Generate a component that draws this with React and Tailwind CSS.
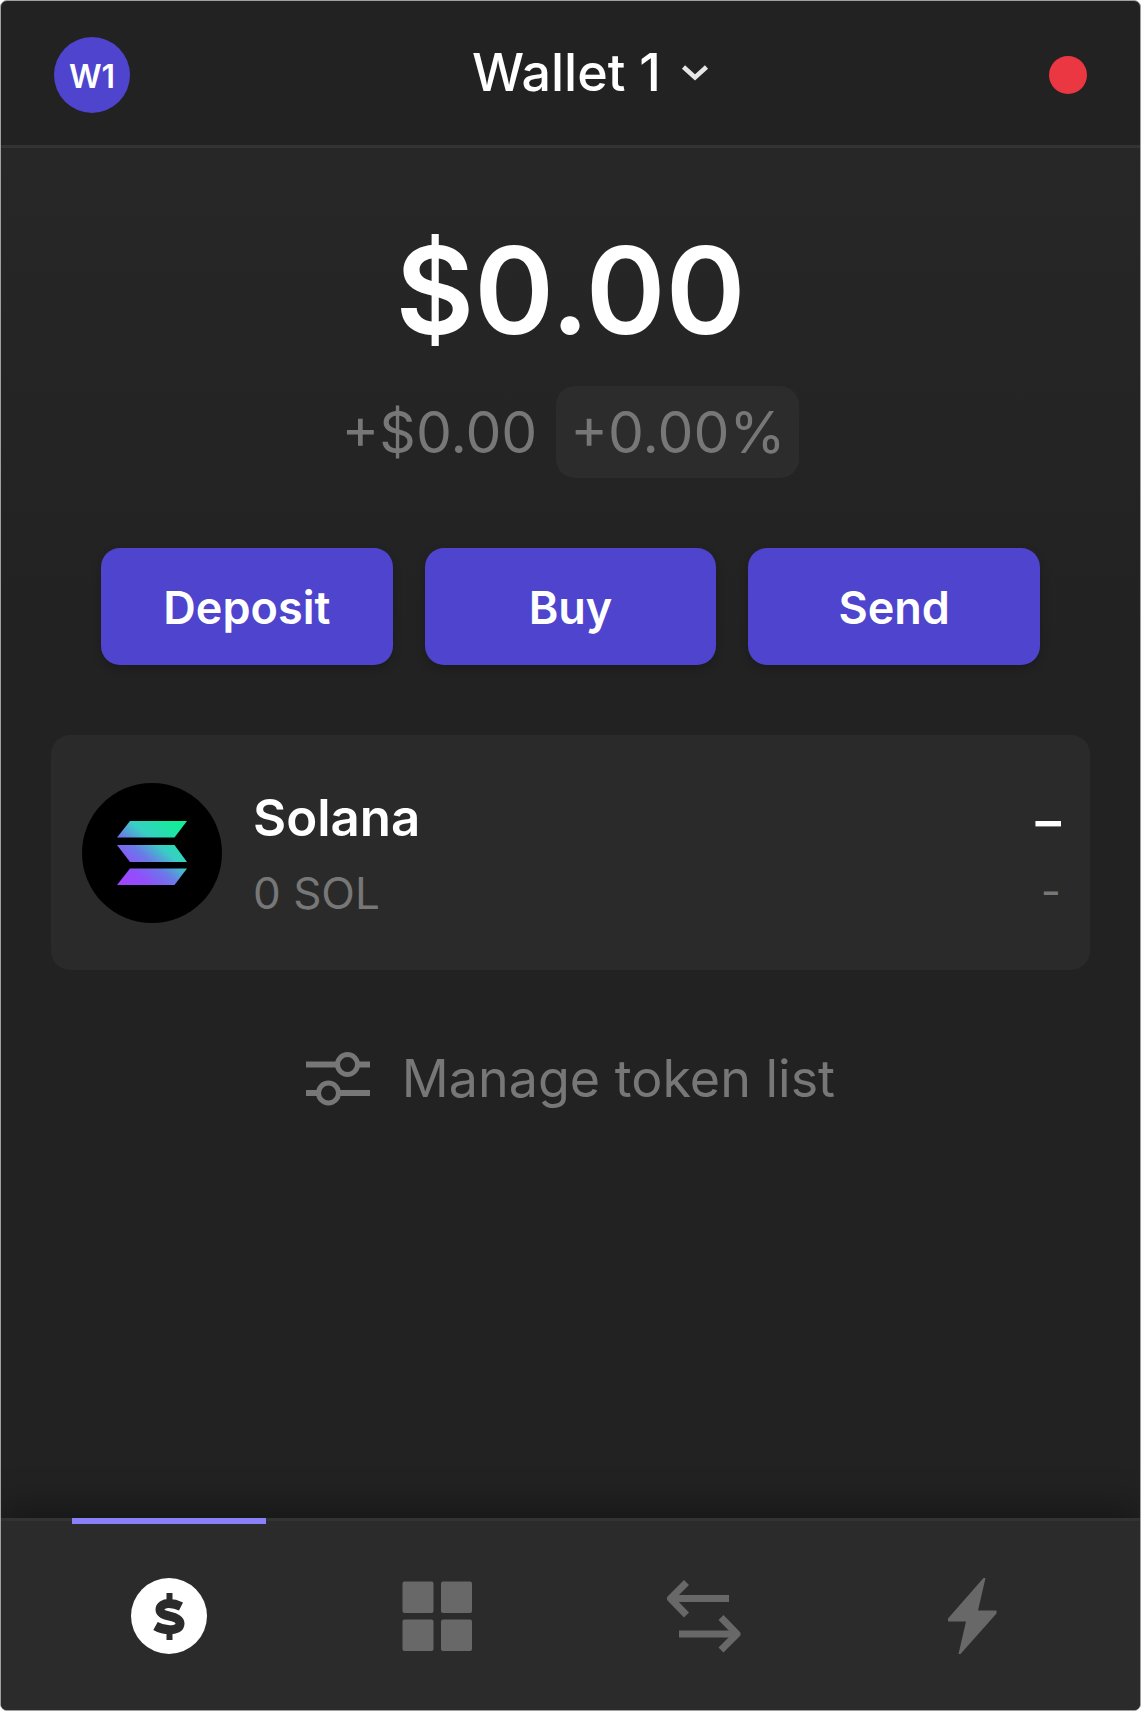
import React from "react";

function Chevron() {
  return (
    <svg className="h-[18px] w-[28px]" viewBox="0 0 28 18" fill="none" aria-hidden="true">
      <path d="M2.5 3 L14 13.5 L25.5 3" stroke="#e6e6e6" strokeWidth="4.6" />
    </svg>
  );
}

function SolanaLogo() {
  return (
    <svg className="size-[140px] shrink-0" viewBox="0 0 140 140" role="img" aria-label="Solana logo">
      <defs>
        <linearGradient id="sol" gradientUnits="userSpaceOnUse" x1="42" y1="102" x2="92" y2="42">
          <stop offset="0" stopColor="#a344ff" />
          <stop offset="0.22" stopColor="#9050fa" />
          <stop offset="0.45" stopColor="#6a7ae8" />
          <stop offset="0.68" stopColor="#38cfc4" />
          <stop offset="1" stopColor="#16eb9c" />
        </linearGradient>
      </defs>
      <circle cx="70" cy="70" r="70" fill="#000" />
      <g fill="url(#sol)">
        <path d="M48 38H105L92.5 54.500H35Z" />
        <path d="M35 62H92.500L105 79H48Z" />
        <path d="M48 85.500H105L92.500 102H35Z" />
      </g>
    </svg>
  );
}

function Sliders() {
  return (
    <svg className="h-[54px] w-[64px]" viewBox="0 0 64 54" fill="none" stroke="#777" aria-hidden="true">
      <g strokeWidth="6">
        <path d="M0 12.500H30M53 12.500H64" />
        <path d="M0 41H11M34 41H64" />
      </g>
      <g strokeWidth="5">
        <circle cx="41.500" cy="12.500" r="10" />
        <circle cx="22.500" cy="41" r="10" />
      </g>
    </svg>
  );
}

function DollarIcon() {
  return (
    <svg className="size-[76px]" viewBox="0 0 76 76" fill="none" aria-hidden="true">
      <circle cx="38" cy="38" r="38" fill="#fff" />
      <g stroke="#2b2b2b">
        <path d="M38.500 15V25M38.500 52V62" strokeWidth="6" />
        <path
          d="M50 28.500C46 26.500 42 25.500 38 25.500C32.500 25.500 29 28 29 31.500C29 35.500 33 36.800 38.500 38.200C45 39.800 49 41.500 49 45.500C49 50 44.500 51.800 38.500 51.800C33.500 51.800 29 50.500 24.500 48"
          strokeWidth="9"
        />
      </g>
    </svg>
  );
}

function GridIcon() {
  return (
    <svg className="size-[76px]" viewBox="0 0 76 76" fill="#686868" aria-hidden="true">
      <rect x="3.500" y="3.500" width="31" height="31.500" rx="2" />
      <rect x="42" y="3.500" width="31" height="31.500" rx="2" />
      <rect x="3.500" y="41.500" width="31" height="31.500" rx="2" />
      <rect x="42" y="41.500" width="31" height="31.500" rx="2" />
    </svg>
  );
}

function SwapIcon() {
  return (
    <svg
      className="size-[76px]"
      viewBox="0 0 76 76"
      fill="none"
      stroke="#686868"
      strokeWidth="7"
      strokeLinejoin="round"
      aria-hidden="true"
    >
      <path d="M63 20.500H6" />
      <path d="M20.500 4.500L4.500 20.500L20.500 37" />
      <path d="M13 56H70" />
      <path d="M55 39.500L71 56L55 72" />
    </svg>
  );
}

function BoltIcon() {
  return (
    <svg className="size-[76px]" viewBox="0 0 76 76" fill="#686868" aria-hidden="true">
      <path d="M51.500 0L44 32.500H62.500V35.500L26.500 76H24.500L32 43.500H14V40.500L49.500 0Z" />
    </svg>
  );
}

const tabs = [
  { label: "Balances", Icon: DollarIcon, active: true },
  { label: "Collectibles", Icon: GridIcon },
  { label: "Swap", Icon: SwapIcon },
  { label: "Activity", Icon: BoltIcon },
];

export default function App() {
  return (
    <div className="min-h-screen bg-white font-['Inter',sans-serif]">
      <div className="flex min-h-screen flex-col overflow-hidden rounded-[7px] border border-[#a0a0a0] bg-[#222222] text-white">
        <header className="grid h-[147px] shrink-0 grid-cols-[1fr_auto_1fr] items-center border-b-3 border-[#333333] px-[53px] pt-1">
          <button
            aria-label="Account W1"
            className="flex size-[76px] items-center justify-center rounded-full bg-[#4e44ce] pt-1 text-[32px] leading-none font-semibold"
          >
            W1
          </button>
          <button className="ml-10 flex items-center gap-5 pb-1 text-[52px] leading-[60px] font-medium">
            Wallet 1
            <Chevron />
          </button>
          <span role="status" aria-label="Disconnected" className="size-[38px] justify-self-end rounded-full bg-[#eb3742]" />
        </header>

        <main className="flex flex-1 flex-col bg-linear-to-b from-[#272727] to-[#222222] to-35% px-[50px] pt-[66px]">
          <h1 className="text-center text-[121px] leading-[152px] font-semibold">$0.00</h1>
          <div className="mt-5 flex items-center justify-center gap-[19px] text-[57px] leading-[90px] text-[#777777]">
            <span className="pt-[2px]">+$0.00</span>
            <span className="rounded-[19px] bg-[#2c2c2c] px-[14px] pt-[2px]">+0.00%</span>
          </div>

          <div className="mt-[70px] grid grid-cols-3 gap-8 px-[50px]">
            {["Deposit", "Buy", "Send"].map((name) => (
              <button
                key={name}
                className="h-[117px] rounded-[19px] bg-[#4e44ce] pt-[2px] text-[45px] leading-none font-semibold shadow-[0_4px_10px_rgba(0,0,0,0.2)]"
              >
                {name}
              </button>
            ))}
          </div>

          <button className="mt-[70px] flex h-[235px] items-center gap-[31px] rounded-[19px] bg-[#2a2a2a] pr-[29px] pl-[31px] text-left">
            <SolanaLogo />
            <span className="flex flex-1 flex-col">
              <span className="text-[51px] leading-[80px] font-semibold">Solana</span>
              <span className="text-[44px] leading-[70px] text-[#777777]">0 SOL</span>
            </span>
            <span className="flex flex-col text-right">
              <span className="text-[51px] leading-[76px] font-semibold">–</span>
              <span className="text-[44px] leading-[64px] text-[#777777]">-</span>
            </span>
          </button>

          <button className="mt-[76px] flex items-center justify-center gap-8 text-[52px] leading-[66px] text-[#777777]">
            <Sliders />
            Manage token list
          </button>
        </main>

        <nav className="grid h-[192px] shrink-0 grid-cols-4 border-t-3 border-[#333333] bg-[#2b2b2b] px-[34px] shadow-[0_-8px_36px_rgba(0,0,0,0.4)]">
          {tabs.map(({ label, Icon, active }) => (
            <button key={label} aria-label={label} className="relative flex items-center justify-center">
              {active && <span className="absolute inset-x-[37px] -top-[3px] h-[6px] bg-[#8a81f8]" />}
              <Icon />
            </button>
          ))}
        </nav>
      </div>
    </div>
  );
}
